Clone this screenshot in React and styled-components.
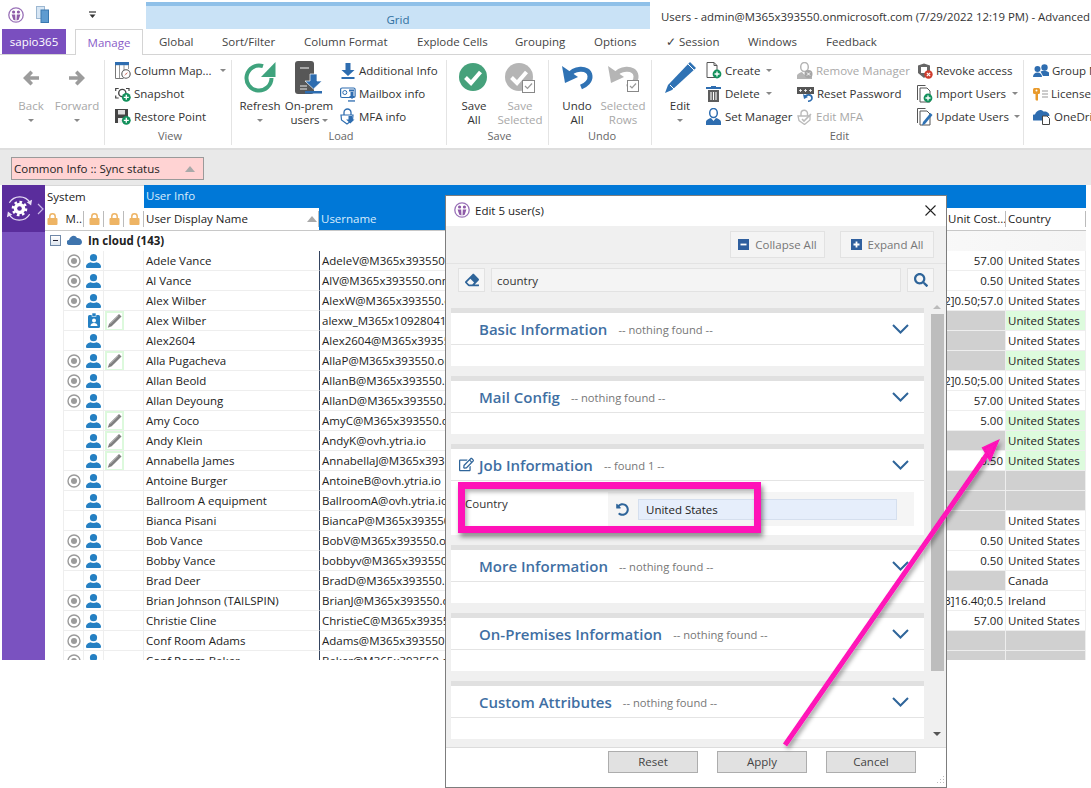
import React from "react";
import styled, { createGlobalStyle } from "styled-components";
import { FaEraser, FaSearch, FaUndoAlt, FaRegEdit } from "react-icons/fa";

const Global = createGlobalStyle`
  html, body { margin: 0; padding: 0; background: #fff; }
  body { font-family: "Open Sans", "Noto Sans", sans-serif; font-size: 12px; color: #222; }
`;

const Page = styled.div`
  position: relative;
  width: 1091px;
  height: 788px;
  overflow: hidden;
  background: #fff;
  display: flex;
  flex-direction: column;
`;

/* ---------- title bar ---------- */
const TitleBar = styled.div`
  height: 29px;
  display: flex;
  flex-shrink: 0;
`;
const QuickAccess = styled.div`
  width: 146px;
  flex-shrink: 0;
  display: flex;
  align-items: center;
  padding: 0 0 0 8px;
  gap: 12px;
  box-sizing: border-box;
`;
const ContextTab = styled.div`
  width: 504px;
  flex-shrink: 0;
  margin-top: 2px;
  background: #c9e2f6;
  border-top: 4px solid #8fc0e8;
  color: #2f6f9e;
  font-size: 11.5px;
  text-align: center;
  line-height: 27px;
  box-sizing: border-box;
`;
const WindowTitle = styled.div`
  margin-left: 11px;
  line-height: 34px;
  font-size: 11.4px;
  white-space: nowrap;
  color: #333;
`;

/* ---------- tabs ---------- */
const TabBar = styled.div`
  height: 26px;
  flex-shrink: 0;
  display: flex;
  padding-left: 2px;
  border-bottom: 1px solid #d4d4d4;
  box-sizing: border-box;
`;
const AppTab = styled.div`
  width: 64px;
  height: 25px;
  margin-right: 9px;
  background: #7a4fbf;
  color: #fff;
  text-align: center;
  line-height: 25px;
  font-size: 11.5px;
`;
const Tab = styled.div`
  width: ${(p) => p.$w}px;
  height: ${(p) => (p.$active ? 26 : 25)}px;
  box-sizing: border-box;
  line-height: 25px;
  white-space: nowrap;
  font-size: 11.5px;
  color: ${(p) => (p.$active ? "#8a5cc8" : "#444")};
  background: #fff;
  ${(p) =>
    p.$active
      ? "border: 1px solid #d4d4d4; border-bottom: none; text-align: center; margin-right: 16px;"
      : ""}
`;

/* ---------- ribbon ---------- */
const Ribbon = styled.div`
  height: 95px;
  flex-shrink: 0;
  display: flex;
  background: #fff;
  border-bottom: 2px solid #dedede;
  box-sizing: border-box;
`;
const Group = styled.div`
  width: ${(p) => p.$w}px;
  flex-shrink: 0;
  box-sizing: border-box;
  display: flex;
  flex-direction: column;
  margin: 5px 0 3px;
  border-right: ${(p) => (p.$last ? "none" : "1px solid #e4e4e4")};
`;
const GroupBody = styled.div`
  flex: 1;
  display: flex;
  padding-left: ${(p) => p.$pad || 0}px;
`;
const GroupLabel = styled.div`
  height: 16px;
  line-height: 14px;
  padding-left: 4px;
  text-align: center;
  color: #666;
  font-size: 11px;
`;
const LargeButton = styled.div`
  width: ${(p) => p.$w}px;
  flex-shrink: 0;
  display: flex;
  flex-direction: column;
  align-items: center;
  font-size: 11.5px;
  line-height: 14px;
  text-align: center;
  white-space: nowrap;
  color: ${(p) => (p.$off ? "#a8a8a8" : "#333")};
`;
const LargeIcon = styled.div`
  height: 36px;
  margin-bottom: 3px;
  display: flex;
  align-items: center;
  justify-content: center;
`;
const Caret = styled.span`
  display: inline-block;
  width: 0;
  height: 0;
  border-left: 3px solid transparent;
  border-right: 3px solid transparent;
  border-top: 3px solid #888;
  vertical-align: middle;
  margin-left: ${(p) => p.$gap ?? 0}px;
`;
const CaretLine = styled.div`
  height: 14px;
`;
const SmallColumn = styled.div`
  width: ${(p) => p.$w}px;
  margin: -1px 0 0 ${(p) => p.$ml || 0}px;
  flex-shrink: 0;
  display: flex;
  flex-direction: column;
`;
const SmallButton = styled.div`
  height: 23px;
  display: flex;
  align-items: center;
  gap: 3px;
  font-size: 11.5px;
  white-space: nowrap;
  color: ${(p) => (p.$off ? "#a8a8a8" : "#333")};
  svg { flex-shrink: 0; }
`;

/* ---------- filter band ---------- */
const Band = styled.div`
  height: 35px;
  flex-shrink: 0;
  background: #e9e9e9;
  padding: 7px 0 0 11px;
  box-sizing: border-box;
`;
const FilterChip = styled.div`
  width: 193px;
  height: 23px;
  box-sizing: border-box;
  background: #ffd3d3;
  border: 1px solid #9a9a9a;
  display: flex;
  align-items: center;
  justify-content: space-between;
  padding: 0 8px 0 2px;
  font-size: 11.5px;
  color: #222;
`;
const CaretUp = styled.span`
  width: 0;
  height: 0;
  border-left: 5px solid transparent;
  border-right: 5px solid transparent;
  border-bottom: 6px solid #a9a9a9;
`;

/* ---------- grid ---------- */
const GridArea = styled.div`
  height: 475px;
  flex-shrink: 0;
  display: flex;
  overflow: hidden;
  padding-left: 2px;
`;
const SideRail = styled.div`
  width: 43px;
  flex-shrink: 0;
  background: #7a52c0;
`;
const SideHead = styled.div`
  height: 47px;
  background: #5a2d9c;
  display: flex;
  align-items: center;
  padding-left: 3px;
  gap: 3px;
`;
const GridBody = styled.div`
  width: 1041px;
  flex-shrink: 0;
`;
const BandRow = styled.div`
  height: 23px;
  display: flex;
  box-sizing: border-box;
  font-size: 11.5px;
  line-height: 21px;
`;
const SystemHead = styled.div`
  width: 99px;
  padding-left: 2px;
  box-sizing: border-box;
  border-top: 1px solid #d8d8d8;
  color: #222;
`;
const InfoHead = styled.div`
  flex: 1;
  padding-left: 2px;
  background: #0078d7;
  color: #d9ecfb;
`;
const columns = "19px 20px 20px 20px 20px 175px 1fr 100px 80px";
const HeadRow = styled.div`
  height: 23px;
  display: grid;
  grid-template-columns: 39px 20px 20px 20px 175px 1fr 60px 80px;
  font-size: 11.5px;
  line-height: 22px;
  box-sizing: border-box;
  border-bottom: 1px solid #c8c8c8;
`;
const HeadCell = styled.div`
  display: flex;
  align-items: center;
  justify-content: ${(p) => (p.$center ? "center" : "space-between")};
  padding: ${(p) => (p.$center ? "0" : "0 2px")};
  box-sizing: border-box;
  overflow: hidden;
  white-space: nowrap;
  color: ${(p) => (p.$blue ? "#d9ecfb" : "#222")};
  background: ${(p) => (p.$blue ? "#0078d7" : "#fff")};
  position: relative;
  &::after {
    content: "";
    display: ${(p) => (p.$blue ? "none" : "block")};
    position: absolute;
    right: 0;
    top: 3px;
    bottom: 3px;
    width: 1px;
    background: #bbb;
  }
`;
const CloudRow = styled.div`
  height: 20px;
  display: flex;
  align-items: center;
  gap: 6px;
  padding: 0 0 2px 5px;
  box-sizing: border-box;
  font-weight: 700;
  font-size: 11.5px;
  color: #222;
  background: linear-gradient(to right, #fff 60%, #f5f5f5);
`;
const MinusBox = styled.span`
  width: 11px;
  height: 11px;
  box-sizing: border-box;
  border: 1px solid #6f88a8;
  background: linear-gradient(#fff, #dfe6ef);
  display: flex;
  align-items: center;
  justify-content: center;
  &::before {
    content: "";
    width: 5px;
    height: 1px;
    background: #223;
  }
`;
const Row = styled.div`
  height: 20px;
  display: grid;
  grid-template-columns: ${columns};
  font-size: 11.5px;
`;
const Cell = styled.div`
  height: 20px;
  box-sizing: border-box;
  border-bottom: 1px solid #eee;
  border-right: ${(p) => (p.$noline ? "none" : "1px solid #eee")};
  display: flex;
  align-items: center;
  justify-content: ${(p) => (p.$end ? "flex-end" : p.$center ? "center" : "flex-start")};
  padding: ${(p) => (p.$center ? "0" : "0 2px")};
  overflow: hidden;
  white-space: nowrap;
  color: #222;
  background: ${(p) => p.$bg || "transparent"};
`;
const Gutter = styled.div`
  border-right: 1px solid #eee;
`;
const UserCell = styled(Cell)`
  border-left: 1px solid #34435e;
  border-right: none;
  padding-left: 2px;
`;
const PenBox = styled.div`
  width: 19px;
  height: 20px;
  box-sizing: border-box;
  border: 2px solid #dcf9dc;
  display: flex;
  align-items: center;
  justify-content: center;
`;

/* ---------- dialog ---------- */
const Dialog = styled.div`
  position: absolute;
  left: 445px;
  top: 195px;
  width: 502px;
  height: 593px;
  box-sizing: border-box;
  border: 1px solid #7d7d7d;
  background: #f0f0f0;
  display: flex;
  flex-direction: column;
`;
const DialogTitle = styled.div`
  height: 30px;
  flex-shrink: 0;
  background: #fff;
  display: flex;
  align-items: center;
  gap: 5px;
  padding: 0 8px 2px;
  box-sizing: border-box;
  font-size: 11.5px;
  color: #222;
`;
const CloseMark = styled.svg`
  margin-left: auto;
  margin-right: 2px;
`;
const ActionBar = styled.div`
  height: 38px;
  flex-shrink: 0;
  box-sizing: border-box;
  display: flex;
  justify-content: flex-end;
  gap: 15px;
  padding: 5px 12px 0 0;
  border-bottom: 1px solid #e3e3e3;
`;
const ActionButton = styled.div`
  width: ${(p) => p.$w}px;
  height: 27px;
  box-sizing: border-box;
  background: #f4f4f4;
  border: 1px solid #e2e2e2;
  display: flex;
  align-items: center;
  justify-content: center;
  gap: 6px;
  font-size: 11.5px;
  color: #777;
`;
const SearchRow = styled.div`
  height: 36px;
  flex-shrink: 0;
  display: flex;
  gap: 6px;
  padding: 4px 12px 0;
  box-sizing: border-box;
`;
const SearchButton = styled.div`
  width: 27px;
  height: 24px;
  box-sizing: border-box;
  background: #f6f6f6;
  border: 1px solid #e2e2e2;
  display: flex;
  align-items: center;
  justify-content: center;
  color: #2f659a;
`;
const SearchInput = styled.div`
  flex: 1;
  height: 24px;
  box-sizing: border-box;
  background: #f4f4f4;
  border: 1px solid #e2e2e2;
  padding-left: 5px;
  line-height: 23px;
  font-size: 11.5px;
  color: #333;
`;
const ScrollArea = styled.div`
  flex: 1;
  min-height: 0;
  display: flex;
  overflow: hidden;
  padding: 8px 0 0 5px;
`;
const SectionList = styled.div`
  width: 473px;
  flex-shrink: 0;
`;
const Section = styled.div`
  margin-bottom: 10px;
  border-top: 5px solid #e0e0e0;
  background: #fff;
`;
const SectionHeader = styled.div`
  height: 32px;
  box-sizing: border-box;
  display: flex;
  align-items: center;
  border-bottom: 1px solid #e4e4e4;
  padding: 0 15px 0 28px;
  position: relative;
`;
const SectionIcon = styled.span`
  position: absolute;
  left: 8px;
  top: 8px;
  color: #2f659a;
  display: flex;
`;
const SectionName = styled.span`
  font-size: 15px;
  font-weight: 600;
  color: #3f6fa3;
`;
const SectionNote = styled.span`
  font-size: 11.2px;
  color: #777;
  margin: 2px 0 0 11px;
`;
const SectionChevron = styled.svg`
  margin-left: auto;
`;
const SectionBody = styled.div`
  height: ${(p) => p.$h}px;
`;
const FieldRow = styled.div`
  display: flex;
  padding: 11px 10px 0 14px;
`;
const FieldLabel = styled.div`
  width: 143px;
  font-size: 11.5px;
  color: #333;
  line-height: 24px;
`;
const FieldValue = styled.div`
  flex: 1;
  height: 34px;
  box-sizing: border-box;
  background: #f5f5f5;
  display: flex;
  align-items: center;
  padding: 0 17px 0 8px;
  gap: 9px;
  color: #2f659a;
`;
const FieldInput = styled.div`
  flex: 1;
  height: 21px;
  box-sizing: border-box;
  background: #e6eefb;
  border: 1px solid #d5dfee;
  padding-left: 7px;
  line-height: 19px;
  font-size: 11.5px;
  color: #222;
`;
const Scrollbar = styled.div`
  width: 14px;
  margin-left: 6px;
  display: flex;
  flex-direction: column;
  align-items: center;
`;
const ScrollThumb = styled.div`
  width: 13px;
  height: 357px;
  margin-top: 5px;
  background: #bdbdbd;
`;
const ScrollUp = styled.div`
  width: 0;
  height: 0;
  border-left: 4px solid transparent;
  border-right: 4px solid transparent;
  border-bottom: 4px solid #bbb;
  margin-top: -3px;
`;
const ScrollDown = styled.div`
  width: 0;
  height: 0;
  border-left: 4px solid transparent;
  border-right: 4px solid transparent;
  border-top: 4px solid #555;
  margin-top: 61px;
`;
const Footer = styled.div`
  height: 40px;
  flex-shrink: 0;
  background: #fff;
  border-top: 1px solid #dcdcdc;
  box-sizing: border-box;
  display: flex;
  justify-content: flex-end;
  gap: 19px;
  padding: 3px 30px 0 0;
  position: relative;
`;
const FooterButton = styled.div`
  width: 90px;
  height: 22px;
  box-sizing: border-box;
  background: #e1e1e1;
  border: 1px solid #adadad;
  text-align: center;
  line-height: 20px;
  font-size: 11.5px;
  color: #444;
`;
const Grip = styled.svg`
  position: absolute;
  right: 1px;
  bottom: 1px;
`;

/* ---------- callouts drawn over the page ---------- */
const HighlightBox = styled.div`
  position: absolute;
  left: 458px;
  top: 482px;
  width: 303px;
  height: 51px;
  box-sizing: border-box;
  border: 7px solid #ff12b8;
  box-shadow: 2px 4px 5px rgba(0, 0, 0, 0.45), inset 2px 3px 4px rgba(0, 0, 0, 0.3);
`;
const ArrowLayer = styled.svg`
  position: absolute;
  left: 0;
  top: 0;
  pointer-events: none;
`;

/* ---------- icons ---------- */
const GREEN = "#3fa37d";
const BLUE = "#2e6db0";
const BADGE = "#13915c";

const Plus = ({ x = 11, y = 11, r = 4.5 }) => (
  <g>
    <circle cx={x} cy={y} r={r} fill={BADGE} />
    <path d={`M${x - 2.5} ${y}h5M${x} ${y - 2.5}v5`} stroke="#fff" strokeWidth="1.3" />
  </g>
);
const AppLogo = ({ size = 16 }) => (
  <svg width={size} height={size} viewBox="0 0 16 16">
    <circle cx="8" cy="8" r="7.2" fill="#fff" stroke="#9a72b8" strokeWidth="1.3" />
    <circle cx="5.6" cy="5" r="1.6" fill="#8e5aa8" />
    <circle cx="10.4" cy="5" r="1.6" fill="#8e5aa8" />
    <path d="M3.6 7.5h3.6l.3 6-2.2-.8zM12.4 7.5H8.8l-.3 6 2.2-.8z" fill="#8e5aa8" />
  </svg>
);
const LayersIcon = () => (
  <svg width="13" height="17" viewBox="0 0 13 17">
    <rect x="0.5" y="0.5" width="8" height="12" fill="#d7e6f4" stroke="#9db8d2" />
    <rect x="5" y="4" width="7.5" height="12.5" fill="#5e9bd0" stroke="#3a78b0" />
  </svg>
);
const QuickMenu = () => (
  <svg width="9" height="8" viewBox="0 0 9 8" style={{ marginLeft: 27 }}>
    <path d="M1 1h7" stroke="#333" strokeWidth="1.2" />
    <path d="M1.5 3.5h6L4.5 7z" fill="#333" />
  </svg>
);
const ArrowLeft = () => (
  <svg width="18" height="16" viewBox="0 0 18 16">
    <path d="M8.5 0.5 1 8l7.5 7.5 2.5-2.5-3-3.2H17V6.2H8l3-3.2z" fill="#9c9c9c" />
  </svg>
);
const ArrowRight = () => (
  <svg width="18" height="16" viewBox="0 0 18 16">
    <path d="M9.5 0.5 17 8l-7.5 7.5L7 13l3-3.2H1V6.2h9L7 3z" fill="#9c9c9c" />
  </svg>
);
const ColumnMapIcon = () => (
  <svg width="16" height="17" viewBox="0 0 16 17">
    <path d="M.5 3v13.5h8" fill="none" stroke="#777" />
    <rect x="0" y="0" width="14" height="3.2" fill="#2e6db0" />
    <path d="M4.5 3v13M9 3v5M13.5 3v4" stroke="#999" />
    <circle cx="11" cy="12" r="4.2" fill="#fff" stroke="#555" strokeWidth="1.1" />
    <path d="M9 14l2-2.6 2-1.4-1.4 2z" fill="#c05040" />
  </svg>
);
const SnapshotIcon = () => (
  <svg width="16" height="16" viewBox="0 0 16 16">
    <path d="M.7 5V2.5h3M11 2.5h3V5M.7 9.5V12h3" fill="none" stroke="#444" strokeWidth="1.2" />
    <circle cx="7.3" cy="7" r="3.6" fill="none" stroke="#444" strokeWidth="1.4" />
    <Plus x={11.3} y={11.3} r={4.4} />
  </svg>
);
const FloppyIcon = () => (
  <svg width="16" height="16" viewBox="0 0 16 16">
    <path d="M0 0h13v14H0z" fill="#444" />
    <rect x="3" y="1" width="7" height="4.5" fill="#ddd" />
    <rect x="3" y="9" width="7" height="5" fill="#eee" />
    <Plus x={11.3} y={11.3} r={4.4} />
  </svg>
);
const RefreshIcon = () => (
  <svg width="32" height="32" viewBox="0 0 32 32">
    <path d="M27.5 16A12.5 12.5 0 1 1 19 4.200" fill="none" stroke={GREEN} strokeWidth="4" />
    <path d="M31.500 0v15H17z" fill={GREEN} />
  </svg>
);
const OnPremIcon = () => (
  <svg width="28" height="34" viewBox="0 0 28 34">
    <rect x="0" y="0" width="19" height="33" rx="3" fill="#575757" />
    <path d="M5 7h9" stroke="#ddd" strokeWidth="1.2" />
    <path d="M5 25h7M5 28h7" stroke="#eee" strokeWidth="1" />
    <path d="M15 13h7v7h5l-8.5 8-8.5-8h5z" fill="#2e6db0" stroke="#fff" strokeWidth=".7" />
    <rect x="10" y="30" width="17" height="2.5" fill="#2e6db0" />
  </svg>
);
const DownloadIcon = () => (
  <svg width="16" height="16" viewBox="0 0 15 16">
    <path d="M5 0h5v7h4l-6.5 6L1 7h4z" fill={BLUE} />
    <rect x="1" y="14" width="13" height="2" fill={BLUE} />
  </svg>
);
const MailboxIcon = () => (
  <svg width="16" height="16" viewBox="0 0 16 16">
    <rect x=".6" y="2" width="14.5" height="9.5" rx="1.5" fill="#fff" stroke={BLUE} strokeWidth="1.2" />
    <circle cx="4.8" cy="6.5" r="2" fill="none" stroke={BLUE} />
    <path d="M9 3.5h5v2H9zM10.5 6h3v4l1.5 0-3 3-3-3h1.5z" fill={BLUE} />
    <rect x="8" y="14.3" width="7" height="1.3" fill={BLUE} />
  </svg>
);
const LockDownIcon = () => (
  <svg width="16" height="17" viewBox="0 0 16 17">
    <path d="M4 7V4.500a3.500 3.500 0 0 1 7 0V7" fill="none" stroke={BLUE} strokeWidth="1.3" />
    <path d="M1 7h12l-.5 5-5.500 4-5.500-4z" fill="#fff" stroke={BLUE} strokeWidth="1.2" />
    <path d="M8.500 8h3.500v3.500h2.500l-4.200 4-4.200-4h2.400z" fill={BLUE} />
  </svg>
);
const SaveAllIcon = ({ off }) => (
  <svg width="30" height="30" viewBox="0 0 30 30">
    <circle cx="14" cy="14" r="14" fill={off ? "#b5b5b5" : "#46a17b"} />
    <path d="M6.500 14.500l5.500 5.500L21.500 9" fill="none" stroke="#fff" strokeWidth="4" />
    {off && (
      <g>
        <rect x="17.500" y="17.500" width="12" height="12" fill="#fff" stroke="#888" />
        <path d="M20 23l2.500 2.500L27 20.500" fill="none" stroke="#999" strokeWidth="1.2" />
      </g>
    )}
  </svg>
);
const UndoIcon = ({ off }) => (
  <svg width="31" height="30" viewBox="0 0 31 30">
    <path
      d="M7 13C10 5 27 3 28 13c.5 5-4 9-9 11"
      fill="none"
      stroke={off ? "#b5b5b5" : "#2f72b4"}
      strokeWidth="5"
    />
    <path d="M0 3l3 17 13-6z" fill={off ? "#b5b5b5" : "#2f72b4"} />
    {off && (
      <g>
        <rect x="19.500" y="17.500" width="11" height="11" fill="#fff" stroke="#888" />
        <path d="M22 23l2 2 4-4.500" fill="none" stroke="#999" strokeWidth="1.200" />
      </g>
    )}
  </svg>
);
const EditIcon = () => (
  <svg width="33" height="34" viewBox="0 0 33 34">
    <path d="M26 1l6 6L8 29l-7 3 3-8z" fill="#2f72b4" />
    <path d="M6 24l4 4" stroke="#fff" strokeWidth="1" />
    <path d="M24 3l6 6" stroke="#fff" strokeWidth="1" />
  </svg>
);
const DocPlusIcon = () => (
  <svg width="16" height="17" viewBox="0 0 16 17">
    <path d="M1 .5h7l3 3v12H1z" fill="#fff" stroke="#555" />
    <path d="M8 .5v3h3" fill="none" stroke="#555" />
    <Plus x={11} y={12} r={4.400} />
  </svg>
);
const TrashIcon = () => (
  <svg width="16" height="16" viewBox="0 0 16 16">
    <rect x="0" y="1" width="15" height="2" fill="#2e6db0" />
    <rect x="5" y="0" width="5" height="2" fill="#2e6db0" />
    <rect x="2" y="4" width="11" height="12" fill="#5d5d5d" />
    <path d="M5 6v8M7.500 6v8M10 6v8" stroke="#fff" strokeWidth="1.100" />
  </svg>
);
const ManagerIcon = ({ off }) => {
  const c = off ? "#b5b5b5" : BLUE;
  return (
    <svg width="16" height="17" viewBox="0 0 16 17">
      <ellipse cx="7.500" cy="5" rx="3.800" ry="4.500" fill="#fff" stroke={c} strokeWidth="1.500" />
      <path d="M0 17v-3c0-2 3-3.500 5-4l2.500 3 2.500-3c2 .5 5 2 5 4v3z" fill={c} />
      {off && (
        <g>
          <circle cx="11.500" cy="12" r="4" fill="#a5a5a5" />
          <path d="M10 10.500l3 3M13 10.500l-3 3" stroke="#fff" />
        </g>
      )}
    </svg>
  );
};
const PasswordIcon = () => (
  <svg width="17" height="16" viewBox="0 0 17 16">
    <rect x="0" y="1" width="17" height="7" fill="#555" />
    <path d="M2 4.500h3M3.500 3v3M7 4.500h3M8.500 3v3M12 4.500h3M13.500 3v3" stroke="#fff" strokeWidth=".8" />
    <path d="M8 11c1-3 7-3 7 1 0 2-2 3-4 3.300" fill="none" stroke={BLUE} strokeWidth="1.600" />
    <path d="M6 8l1 5 4-2z" fill={BLUE} />
  </svg>
);
const LockCheckIcon = () => (
  <svg width="16" height="16" viewBox="0 0 16 16">
    <path d="M4 7V4.500a3.200 3.200 0 0 1 6.500 0V7" fill="none" stroke="#bbb" strokeWidth="1.400" />
    <path d="M1 7h12v4l-5.500 4.500L2 11.500z" fill="#fff" stroke="#bbb" strokeWidth="1.300" />
    <path d="M5 10l2 2 7-7" fill="none" stroke="#bbb" strokeWidth="1.600" />
  </svg>
);
const RevokeIcon = () => (
  <svg width="16" height="16" viewBox="0 0 16 16">
    <path d="M1 2.500 7 .5l6 2v7L7 15l-6-5z" fill="#666" />
    <rect x="4" y="4" width="6" height="6" fill="#fff" />
    <circle cx="11.500" cy="11.500" r="4.200" fill="#cf3d2e" />
    <path d="M9.800 9.800l3.400 3.400M13.200 9.800l-3.400 3.400" stroke="#fff" strokeWidth="1.100" />
  </svg>
);
const DocStack = () => (
  <g>
    <path d="M.5 15V.5h8" fill="none" stroke="#555" />
    <path d="M3 3h7l3 3v11H3z" fill="#fff" stroke="#555" />
  </g>
);
const ImportIcon = () => (
  <svg width="16" height="18" viewBox="0 0 16 18">
    <DocStack />
    <Plus x={11} y={13} r={4.400} />
  </svg>
);
const UpdateIcon = () => (
  <svg width="16" height="18" viewBox="0 0 16 18">
    <DocStack />
    <path d="M13.500 5l2 2L8 16l-3 1.500L6 14z" fill="#2f72b4" />
  </svg>
);
const GroupIcon = () => (
  <svg width="16" height="14" viewBox="0 0 16 14">
    <circle cx="4.500" cy="5" r="3" fill={BLUE} />
    <circle cx="11.500" cy="3.500" r="3.200" fill={BLUE} />
    <path d="M0 13c0-3 2-4.500 4.500-4.500S9 10 9 13zM7.500 7.500c2-1 6-1.500 8.500 1V12h-6z" fill={BLUE} />
  </svg>
);
const LicenseIcon = () => (
  <svg width="15" height="14" viewBox="0 0 15 14">
    <rect x="0" y="1" width="7" height="6" rx="1.500" fill="#e99a2b" />
    <path d="M2.500 7h2.500v6.500H3l-.5-1z" fill="#e99a2b" />
    <circle cx="3.500" cy="3.500" r="1" fill="#fff" />
    <path d="M9 4h6M9 7h6M9 10h6" stroke="#999" />
  </svg>
);
const OneDriveIcon = () => (
  <svg width="18" height="17" viewBox="0 0 18 17">
    <path d="M1 12.500a3 3 0 0 1 1-6C3 3 7 0 10.500 3.500c3-.5 6 1 6 4.500H11v4.500z" fill={BLUE} />
    <path d="M9.500 8h4.500l2.500 2.500v6h-7z" fill="#fff" stroke="#444" />
  </svg>
);
const RailIcon = () => (
  <svg width="29" height="29" viewBox="0 0 30 30">
    <path d="M4.500 9A12.500 12.500 0 0 1 26 9" fill="none" stroke="#e8def6" strokeWidth="1.300" />
    <path d="M25.500 21A12.500 12.500 0 0 1 4 21" fill="none" stroke="#e8def6" strokeWidth="1.300" />
    <path d="M28 6l-1 6-4.500-3.500zM2 24l1-6 4.500 3.500z" fill="#e8def6" />
    <circle cx="15" cy="15" r="6.800" fill="none" stroke="#fff" strokeWidth="2.600" strokeDasharray="2.700 2.600" />
    <circle cx="15" cy="15" r="6" fill="#fff" />
    <circle cx="15" cy="15" r="2.400" fill="#5a2d9c" />
  </svg>
);
const RailChevron = () => (
  <svg width="7" height="12" viewBox="0 0 7 12">
    <path d="M1 1l5 5-5 5" fill="none" stroke="#cbb8e8" strokeWidth="1.200" />
  </svg>
);
const LockIcon = () => (
  <svg width="11" height="12" viewBox="0 0 11 12">
    <path d="M2.800 5.500V3.500a2.700 2.700 0 0 1 5.400 0v2" fill="none" stroke="#eeb464" strokeWidth="1.500" />
    <rect x="0.500" y="5" width="10" height="7" rx="1" fill="#eeb464" />
  </svg>
);
const CloudIcon = () => (
  <svg width="15" height="10" viewBox="0 0 15 10">
    <path d="M2.500 10A2.500 2.500 0 0 1 2 5C3 1 8-1 10 3c3-.5 5 2 5 4 0 2-1.500 3-2.500 3z" fill="#3e74ad" />
  </svg>
);
const RadioIcon = () => (
  <svg width="14" height="14" viewBox="0 0 14 14">
    <circle cx="7" cy="7" r="6" fill="#fff" stroke="#9b9b9b" strokeWidth="1.400" />
    <circle cx="7" cy="7" r="3" fill="#9b9b9b" />
  </svg>
);
const PersonIcon = () => (
  <svg width="15" height="14" viewBox="0 0 15 14">
    <circle cx="7.500" cy="3.700" r="3.600" fill="#2580c3" />
    <path d="M0 12.500c0-2.500 3-4 4.500-4.300 1.800 1 4.200 1 6 0 1.500.3 4.500 1.800 4.500 4.300V13a1 1 0 0 1-1 1H1a1 1 0 0 1-1-1z" fill="#2580c3" />
  </svg>
);
const BadgeIcon = () => (
  <svg width="12" height="15" viewBox="0 0 12 15">
    <rect x="0" y="2" width="12" height="13" rx="1.500" fill="#2580c3" />
    <rect x="4" y="0" width="4" height="3.500" fill="#2580c3" stroke="#fff" strokeWidth=".6" />
    <circle cx="6" cy="7.500" r="2" fill="#fff" />
    <path d="M2.500 13c0-2 1.500-3 3.500-3s3.500 1 3.500 3z" fill="#fff" />
  </svg>
);
const PenIcon = () => (
  <svg width="16" height="16" viewBox="0 0 16 16">
    <path d="M12.800 .5 15.500 3.200 5 13.700 .8 15.200 2.300 11z" fill="#808080" />
    <path d="M3.500 11 12 2.500" stroke="#bdbdbd" strokeWidth=".8" />
  </svg>
);
const SquareMark = ({ plus }) => (
  <svg width="11" height="11" viewBox="0 0 11 11">
    <rect width="11" height="11" fill="#2f5f9e" />
    <path d={plus ? "M2.500 5.500h6M5.500 2.500v6" : "M2.500 5.500h6"} stroke="#fff" strokeWidth="1.800" />
  </svg>
);
const ChevronDown = () => (
  <SectionChevron width="17" height="10" viewBox="0 0 17 10">
    <path d="M1 1l7.500 7.500L16 1" fill="none" stroke="#2f659a" strokeWidth="2" />
  </SectionChevron>
);

/* ---------- data ---------- */
const US = "United States";
const M = "@M365x393550.onmicrosoft.com";
const GRAY = "#d0d0d0";
const rows = [
  ["Adele Vance", "AdeleV" + M, 1, 0, 0, "57.00", US, 0],
  ["Al Vance", "AlV" + M, 1, 0, 0, "0.50", US, 0],
  ["Alex Wilber", "AlexW" + M, 1, 0, 0, "[2]0.50;57.0", US, 0],
  ["Alex Wilber", "alexw_M365x10928041.onmicrosoft.com", 0, 1, 1, null, US, 1],
  ["Alex2604", "Alex2604" + M, 0, 0, 0, null, US, 0],
  ["Alla Pugacheva", "AllaP" + M, 1, 0, 1, null, US, 1],
  ["Allan Beold", "AllanB" + M, 1, 0, 0, "[2]0.50;5.00", US, 0],
  ["Allan Deyoung", "AllanD" + M, 1, 0, 0, "57.00", US, 0],
  ["Amy Coco", "AmyC" + M, 0, 0, 1, "5.00", US, 1],
  ["Andy Klein", "AndyK@ovh.ytria.io", 0, 0, 1, null, US, 1],
  ["Annabella James", "AnnabellaJ" + M, 0, 0, 1, "0.50", US, 1],
  ["Antoine Burger", "AntoineB@ovh.ytria.io", 1, 0, 0, null, null, 0],
  ["Ballroom A equipment", "BallroomA@ovh.ytria.io", 0, 0, 0, null, null, 0],
  ["Bianca Pisani", "BiancaP" + M, 0, 0, 0, null, US, 0],
  ["Bob Vance", "BobV" + M, 1, 0, 0, "0.50", US, 0],
  ["Bobby Vance", "bobbyv" + M, 1, 0, 0, "0.50", US, 0],
  ["Brad Deer", "BradD" + M, 0, 0, 0, null, "Canada", 0],
  ["Brian Johnson (TAILSPIN)", "BrianJ" + M, 1, 0, 0, "[3]16.40;0.5", "Ireland", 0],
  ["Christie Cline", "ChristieC" + M, 1, 0, 0, "57.00", US, 0],
  ["Conf Room Adams", "Adams" + M, 1, 0, 0, null, null, 0],
  ["Conf Room Baker", "Baker" + M, 1, 0, 0, null, null, 0],
];

const sections = [
  { name: "Basic Information", note: "-- nothing found --", h: 21 },
  { name: "Mail Config", note: "-- nothing found --", h: 21 },
  { name: "Job Information", note: "-- found 1 --", h: 54, job: true },
  { name: "More Information", note: "-- nothing found --", h: 21 },
  { name: "On-Premises Information", note: "-- nothing found --", h: 21 },
  { name: "Custom Attributes", note: "-- nothing found --", h: 21 },
];

const tabs = [
  ["Global", 63],
  ["Sort/Filter", 82],
  ["Column Format", 113],
  ["Explode Cells", 98],
  ["Grouping", 79],
  ["Options", 72],
];

const Large = ({ w, icon, off, caret, lines, inlineCaret }) => (
  <LargeButton $w={w} $off={off}>
    <LargeIcon>{icon}</LargeIcon>
    {lines.map((l, i) => (
      <div key={l}>
        {l}
        {inlineCaret && i === lines.length - 1 && <Caret $gap={2} />}
      </div>
    ))}
    {caret && (
      <CaretLine>
        <Caret />
      </CaretLine>
    )}
  </LargeButton>
);

const Small = ({ icon, text, off, caret }) => (
  <SmallButton $off={off}>
    {icon}
    <span>{text}</span>
    {caret !== undefined && <Caret $gap={caret} />}
  </SmallButton>
);

export default function App() {
  return (
    <Page>
      <Global />
      <TitleBar>
        <QuickAccess>
          <AppLogo />
          <LayersIcon />
          <QuickMenu />
        </QuickAccess>
        <ContextTab>Grid</ContextTab>
        <WindowTitle>Users - admin@M365x393550.onmicrosoft.com (7/29/2022 12:19 PM) - Advanced</WindowTitle>
      </TitleBar>

      <TabBar>
        <AppTab>sapio365</AppTab>
        <Tab $w={68} $active>Manage</Tab>
        {tabs.map(([t, w]) => (
          <Tab key={t} $w={w}>{t}</Tab>
        ))}
        <Tab $w={82}>✓ Session</Tab>
        <Tab $w={78}>Windows</Tab>
        <Tab $w={70}>Feedback</Tab>
      </TabBar>

      <Ribbon>
        <Group $w={105}>
          <GroupBody $pad={8}>
            <Large w={46} off caret icon={<ArrowLeft />} lines={["Back"]} />
            <Large w={46} off caret icon={<ArrowRight />} lines={["Forward"]} />
          </GroupBody>
          <GroupLabel />
        </Group>
        <Group $w={127}>
          <GroupBody $pad={10}>
            <SmallColumn $w={115}>
              <Small icon={<ColumnMapIcon />} text="Column Map..." caret={5} />
              <Small icon={<SnapshotIcon />} text="Snapshot" />
              <Small icon={<FloppyIcon />} text="Restore Point" />
            </SmallColumn>
          </GroupBody>
          <GroupLabel>View</GroupLabel>
        </Group>
        <Group $w={215}>
          <GroupBody $pad={6}>
            <Large w={44} caret icon={<RefreshIcon />} lines={["Refresh"]} />
            <Large w={54} inlineCaret icon={<OnPremIcon />} lines={["On-prem", "users"]} />
            <SmallColumn $w={105} $ml={4}>
              <Small icon={<DownloadIcon />} text="Additional Info" />
              <Small icon={<MailboxIcon />} text="Mailbox info" />
              <Small icon={<LockDownIcon />} text="MFA info" />
            </SmallColumn>
          </GroupBody>
          <GroupLabel>Load</GroupLabel>
        </Group>
        <Group $w={102}>
          <GroupBody $pad={4}>
            <Large w={46} icon={<SaveAllIcon />} lines={["Save", "All"]} />
            <Large w={46} off icon={<SaveAllIcon off />} lines={["Save", "Selected"]} />
          </GroupBody>
          <GroupLabel>Save</GroupLabel>
        </Group>
        <Group $w={103}>
          <GroupBody $pad={5}>
            <Large w={46} icon={<UndoIcon />} lines={["Undo", "All"]} />
            <Large w={46} off icon={<UndoIcon off />} lines={["Selected", "Rows"]} />
          </GroupBody>
          <GroupLabel>Undo</GroupLabel>
        </Group>
        <Group $w={372}>
          <GroupBody $pad={8}>
            <Large w={40} caret icon={<EditIcon />} lines={["Edit"]} />
            <SmallColumn $w={91} $ml={6}>
              <Small icon={<DocPlusIcon />} text="Create" caret={3} />
              <Small icon={<TrashIcon />} text="Delete" caret={3} />
              <Small icon={<ManagerIcon />} text="Set Manager" />
            </SmallColumn>
            <SmallColumn $w={120}>
              <Small off icon={<ManagerIcon off />} text="Remove Manager" />
              <Small icon={<PasswordIcon />} text="Reset Password" />
              <Small off icon={<LockCheckIcon />} text="Edit MFA" />
            </SmallColumn>
            <SmallColumn $w={105}>
              <Small icon={<RevokeIcon />} text="Revoke access" />
              <Small icon={<ImportIcon />} text="Import Users" caret={3} />
              <Small icon={<UpdateIcon />} text="Update Users" caret={2} />
            </SmallColumn>
          </GroupBody>
          <GroupLabel>Edit</GroupLabel>
        </Group>
        <Group $w={67} $last>
          <GroupBody $pad={9}>
            <SmallColumn $w={120}>
              <Small icon={<GroupIcon />} text="Group Memberships" />
              <Small icon={<LicenseIcon />} text="Licenses" />
              <Small icon={<OneDriveIcon />} text="OneDrive" />
            </SmallColumn>
          </GroupBody>
        </Group>
      </Ribbon>

      <Band>
        <FilterChip>
          Common Info :: Sync status
          <CaretUp />
        </FilterChip>
      </Band>

      <GridArea>
        <SideRail>
          <SideHead>
            <RailIcon />
            <RailChevron />
          </SideHead>
        </SideRail>
        <GridBody>
          <BandRow>
            <SystemHead>System</SystemHead>
            <InfoHead>User Info</InfoHead>
          </BandRow>
          <HeadRow>
            <HeadCell>
              <LockIcon />
              <span>M..</span>
            </HeadCell>
            <HeadCell $center><LockIcon /></HeadCell>
            <HeadCell $center><LockIcon /></HeadCell>
            <HeadCell $center><LockIcon /></HeadCell>
            <HeadCell>
              User Display Name
              <CaretUp />
            </HeadCell>
            <HeadCell $blue>Username</HeadCell>
            <HeadCell>Unit Cost...</HeadCell>
            <HeadCell>Country</HeadCell>
          </HeadRow>
          <CloudRow>
            <MinusBox />
            <CloudIcon />
            In cloud (143)
          </CloudRow>
          {rows.map(([name, user, radio, badge, pen, cost, country, changed], i) => (
            <Row key={i}>
              <Gutter />
              <Cell $center>{radio ? <RadioIcon /> : null}</Cell>
              <Cell $center>{badge ? <BadgeIcon /> : <PersonIcon />}</Cell>
              <Cell $center $noline>
                {pen ? (
                  <PenBox>
                    <PenIcon />
                  </PenBox>
                ) : null}
              </Cell>
              <Cell />
              <Cell $noline>{name}</Cell>
              <UserCell>{user}</UserCell>
              <Cell $end $bg={cost ? undefined : GRAY}>{cost}</Cell>
              <Cell $bg={country ? (changed ? "#ddfbdd" : undefined) : GRAY}>{country}</Cell>
            </Row>
          ))}
        </GridBody>
      </GridArea>

      <Dialog>
        <DialogTitle>
          <AppLogo />
          Edit 5 user(s)
          <CloseMark width="11" height="11" viewBox="0 0 11 11">
            <path d="M.5.5l10 10M10.500.5l-10 10" stroke="#222" strokeWidth="1.100" />
          </CloseMark>
        </DialogTitle>
        <ActionBar>
          <ActionButton $w={95}>
            <SquareMark />
            Collapse All
          </ActionButton>
          <ActionButton $w={94}>
            <SquareMark plus />
            Expand All
          </ActionButton>
        </ActionBar>
        <SearchRow>
          <SearchButton>
            <FaEraser size={14} />
          </SearchButton>
          <SearchInput>country</SearchInput>
          <SearchButton>
            <FaSearch size={14} />
          </SearchButton>
        </SearchRow>
        <ScrollArea>
          <SectionList>
            {sections.map((s) => (
              <Section key={s.name}>
                <SectionHeader>
                  {s.job && (
                    <SectionIcon>
                      <FaRegEdit size={15} />
                    </SectionIcon>
                  )}
                  <SectionName>{s.name}</SectionName>
                  <SectionNote>{s.note}</SectionNote>
                  <ChevronDown />
                </SectionHeader>
                <SectionBody $h={s.h}>
                  {s.job && (
                    <FieldRow>
                      <FieldLabel>Country</FieldLabel>
                      <FieldValue>
                        <FaUndoAlt size={13} />
                        <FieldInput>United States</FieldInput>
                      </FieldValue>
                    </FieldRow>
                  )}
                </SectionBody>
              </Section>
            ))}
          </SectionList>
          <Scrollbar>
            <ScrollUp />
            <ScrollThumb />
            <ScrollDown />
          </Scrollbar>
        </ScrollArea>
        <Footer>
          <FooterButton>Reset</FooterButton>
          <FooterButton>Apply</FooterButton>
          <FooterButton>Cancel</FooterButton>
          <Grip width="12" height="12" viewBox="0 0 12 12">
            <path d="M10 2h1v1h-1zM7 5h1v1H7zM10 5h1v1h-1zM4 8h1v1H4zM7 8h1v1H7zM10 8h1v1h-1z" fill="#bbb" />
          </Grip>
        </Footer>
      </Dialog>

      <HighlightBox />
      <ArrowLayer width="1091" height="788" viewBox="0 0 1091 788">
        <defs>
          <filter id="arrowShadow" x="-10%" y="-10%" width="120%" height="120%">
            <feDropShadow dx="2" dy="3" stdDeviation="2" floodColor="#000" floodOpacity="0.35" />
          </filter>
        </defs>
        <g filter="url(#arrowShadow)">
          <path d="M785 745L988 453" stroke="#ff12b8" strokeWidth="5" fill="none" />
          <path d="M998 441L983 448L990 460z" fill="#ff12b8" stroke="#ff12b8" strokeWidth="2" />
        </g>
      </ArrowLayer>
    </Page>
  );
}
